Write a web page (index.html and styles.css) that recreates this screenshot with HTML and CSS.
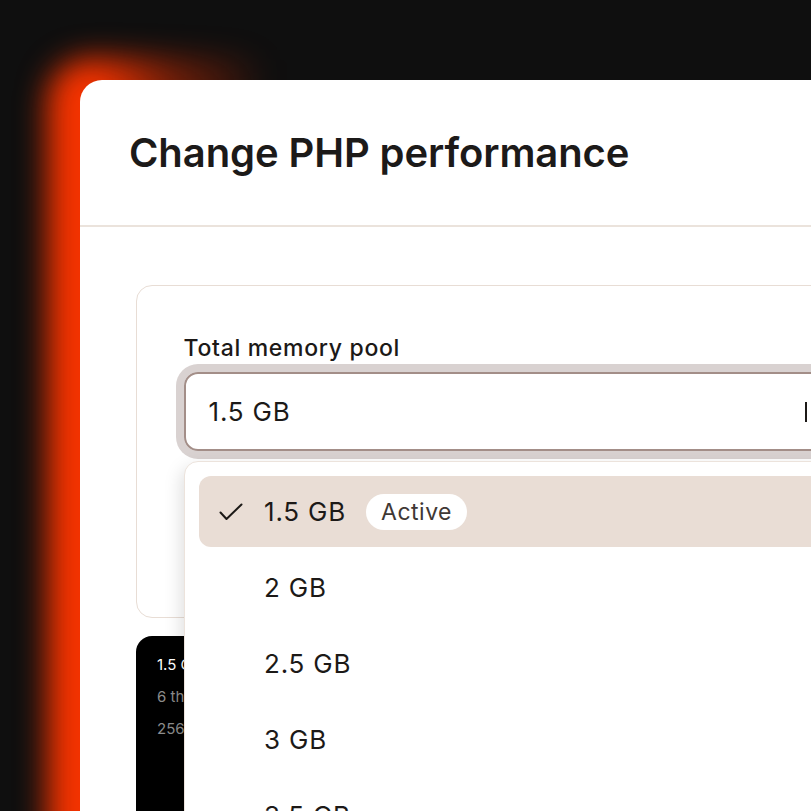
FILE: index.html
```html
<!DOCTYPE html>
<html lang="en">
<head>
<meta charset="utf-8">
<title>Change PHP performance</title>
<link rel="stylesheet" href="styles.css">
</head>
<body>
<div class="glow"></div>
<main class="panel">
  <header class="panel-header">
    <h1 class="title">Change PHP performance</h1>
  </header>
  <div class="panel-body">
    <section class="card">
      <label class="field-label">Total memory pool</label>
      <div class="select-wrap">
        <div class="select">
          <span class="select-value">1.5 GB</span>
          <span class="select-bar"></span>
        </div>
        <ul class="menu">
          <li class="option selected">
            <svg class="check" width="24" height="24" viewBox="0 0 24 24" fill="none" stroke="#1c1917" stroke-width="2" stroke-linecap="round" stroke-linejoin="round"><path d="M1.5 12.5 L7.5 19 L22.5 4.5"/></svg>
            <span class="option-text">1.5 GB</span>
            <span class="badge">Active</span>
          </li>
          <li class="option"><span class="check-slot"></span><span class="option-text">2 GB</span></li>
          <li class="option"><span class="check-slot"></span><span class="option-text">2.5 GB</span></li>
          <li class="option"><span class="check-slot"></span><span class="option-text">3 GB</span></li>
          <li class="option"><span class="check-slot"></span><span class="option-text">3.5 GB</span></li>
        </ul>
      </div>
    </section>
    <section class="summary">
      <p class="summary-title">1.5 GB memory pool</p>
      <p class="summary-line">6 threads</p>
      <p class="summary-line">256 MB per thread</p>
    </section>
  </div>
</main>
</body>
</html>
```
FILE: styles.css
```css
html, body {
  margin: 0;
  height: 811px;
  overflow: hidden;
  background: #0f0f0f;
}
body {
  position: relative;
  box-sizing: border-box;
  padding: 80px 0 0 80px;
  font-family: Inter, "Noto Sans", "Liberation Sans", sans-serif;
  color: #1c1917;
}
.glow {
  position: absolute;
  left: 47px;
  top: 58px;
  width: 240px;
  height: 900px;
  border-radius: 44px;
  background: linear-gradient(90deg, #f53300 0, #f53300 50px, rgba(245, 51, 0, 0.45) 120px, rgba(245, 51, 0, 0) 220px);
  filter: blur(15px);
}
.panel {
  position: relative;
  width: 900px;
  min-height: 900px;
  background: #fff;
  border-radius: 22px 0 0 0;
}
.panel-header {
  height: 145px;
  padding-left: 49px;
  display: flex;
  align-items: center;
  border-bottom: 2px solid #ebe3dc;
}
.title {
  margin: 0;
  font-size: 40px;
  font-weight: 600;
  letter-spacing: -0.1px;
  color: #1c1a19;
}
.panel-body {
  padding: 58px 0 0 56px;
  display: flex;
  flex-direction: column;
  gap: 18px;
}
.card {
  position: relative;
  z-index: 2;
  width: 800px;
  height: 333px;
  box-sizing: border-box;
  border: 1.5px solid #e8ddd5;
  border-radius: 16px;
  padding: 47px 0 0 46.5px;
}
.field-label {
  display: block;
  font-size: 23px;
  line-height: 30px;
  font-weight: 500;
  letter-spacing: 0.7px;
  color: #1c1917;
  margin-bottom: 9px;
}
.select-wrap {
  position: relative;
}
.select {
  width: 660px;
  height: 79px;
  box-sizing: border-box;
  border: 2px solid #a38e88;
  border-radius: 14px;
  box-shadow: 0 0 0 8px #d9d2d1;
  display: flex;
  align-items: center;
  justify-content: space-between;
  padding: 0 35px 0 23px;
  font-size: 26px;
  letter-spacing: 0.8px;
  color: #1c1917;
}
.select-bar {
  width: 2px;
  height: 20px;
  background: #1c1917;
}
.menu {
  position: absolute;
  left: 0;
  top: 89px;
  z-index: 5;
  width: 700px;
  height: 420px;
  box-sizing: border-box;
  margin: 0;
  padding: 14px 0 0 14.5px;
  list-style: none;
  background: #fff;
  border: 1.5px solid #ece3dc;
  border-radius: 14px;
  box-shadow: -3px 6px 18px rgba(0, 0, 0, 0.13);
  display: flex;
  flex-direction: column;
  gap: 5px;
}
.option {
  flex: none;
  height: 71px;
  display: flex;
  align-items: center;
  padding-left: 20px;
  border-radius: 12px;
  font-size: 26px;
  letter-spacing: 0.8px;
  color: #1c1917;
}
.option.selected {
  background: #e9ddd5;
}
.check, .check-slot {
  flex: none;
  width: 24px;
  height: 24px;
  margin-right: 21px;
}
.badge {
  margin-left: 20px;
  height: 36px;
  padding: 0 15px;
  display: flex;
  align-items: center;
  background: #fff;
  border-radius: 18px;
  font-size: 23px;
  letter-spacing: 0.5px;
  color: #3f3835;
}
.summary {
  height: 300px;
  padding: 13px 21px;
  background: #000;
  border-radius: 16px 16px 0 0;
  color: #fff;
  font-size: 15px;
  line-height: 32px;
}
.summary p {
  margin: 0;
}
.summary-line {
  color: #8c8c8c;
}
```
